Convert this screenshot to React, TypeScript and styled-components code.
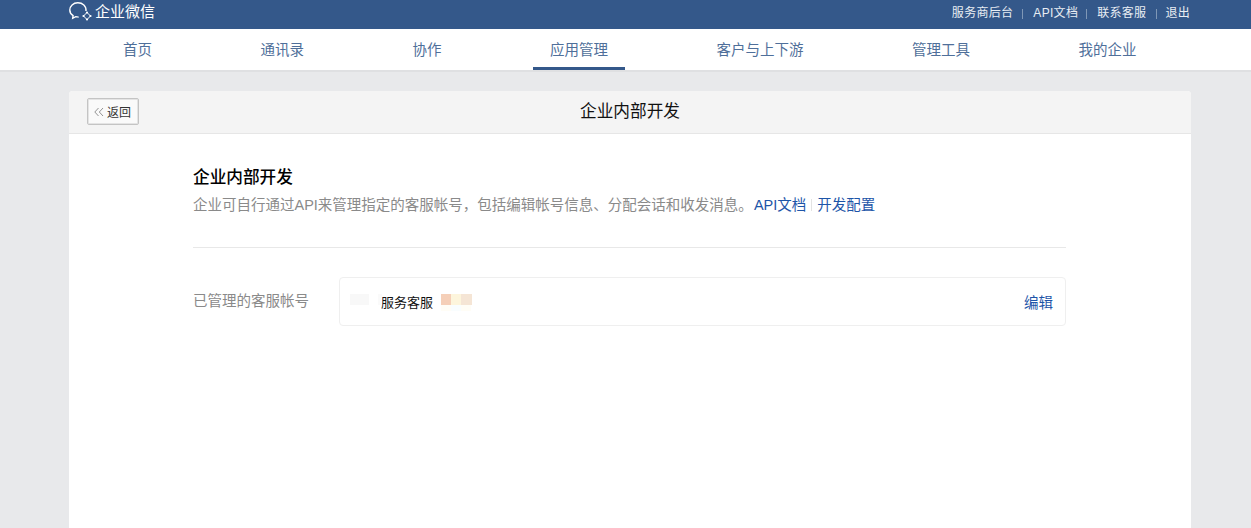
import React from 'react';
import styled, { createGlobalStyle } from 'styled-components';

const FONT = '"PingFang SC", "Liberation Sans", "Noto Sans CJK SC", sans-serif';

const GlobalStyle = createGlobalStyle`
    html, body {
        margin: 0;
        padding: 0;
        height: 100%;
        overflow: hidden;
        background: #e8e9eb;
        font-family: ${FONT};
    }
`;

const TopBar = styled.div`
    height: 29px;
    background: #34588a;
    padding: 0 61px 0 69px;
    display: flex;
    align-items: center;
    justify-content: space-between;
`;

const Logo = styled.div`
    display: flex;
    align-items: center;
    gap: 2px;
    margin-top: -5px;
    color: #fff;
    font-size: 15px;
    line-height: 20px;
`;

const TopLinks = styled.div`
    display: flex;
    align-items: center;
    margin-top: -4px;
    font-size: 12px;
    line-height: 16px;
    color: #e8edf3;
`;

const TopLink = styled.span`
    letter-spacing: 0.3px;
`;

const TopSep = styled.span<{ $gapLeft: number; $gapRight: number }>`
    width: 1px;
    height: 10px;
    background: #7f97b6;
    margin: 2px ${({ $gapRight }) => $gapRight}px 0 ${({ $gapLeft }) => $gapLeft}px;
`;

const Nav = styled.nav`
    height: 41px;
    background: #fff;
    border-bottom: 2px solid #dfe0e2;
    display: flex;
    padding-left: 106px;
    gap: 75px;
`;

const NavItem = styled.a<{ $active?: boolean }>`
    height: 41px;
    box-sizing: border-box;
    padding: 1px 16.5px 0 17px;
    font-size: 14.5px;
    line-height: 41px;
    color: #4f6f9a;
    border-bottom: 3px solid ${({ $active }) => ($active ? '#34588a' : 'transparent')};
`;

const Card = styled.main`
    margin: 19px 60px 0 69px;
    height: 440px;
    background: #fff;
    border-radius: 4px 4px 0 0;
`;

const CardHeader = styled.header`
    position: relative;
    height: 43px;
    padding-bottom: 1px;
    box-sizing: border-box;
    background: #f4f4f4;
    border-bottom: 1px solid #e6e6e6;
    border-radius: 4px 4px 0 0;
    display: flex;
    align-items: center;
    justify-content: center;
    font-size: 16.67px;
    line-height: 40px;
    color: #111;
`;

const BackButton = styled.button`
    position: absolute;
    left: 18px;
    top: 7px;
    width: 52px;
    height: 27px;
    box-sizing: border-box;
    padding: 0 0 0 6px;
    display: flex;
    align-items: center;
    gap: 3px;
    background: #fafafa;
    border: 1px solid #c4c4c4;
    border-radius: 2px;
    box-shadow: inset 0 0 0 1px #e4e4e4;
    font-family: ${FONT};
    font-size: 12px;
    color: #333;
`;

const Content = styled.section`
    margin: 0 125px 0 124px;
    padding-top: 33px;
`;

const Title = styled.h2`
    margin: 0;
    font-size: 16.67px;
    line-height: 22px;
    font-weight: 500;
    color: #000;
`;

const Desc = styled.p`
    margin: 6px 0 0;
    font-size: 14.5px;
    line-height: 20px;
    color: #8a8a8a;
    padding-bottom: 32px;
    border-bottom: 1px solid #e8e8e8;
`;

const DocLink = styled.a<{ $first?: boolean }>`
    color: #1d55a8;
    margin-left: ${({ $first }) => ($first ? '1px' : '0')};
`;

const LinkSep = styled.span`
    display: inline-block;
    width: 1px;
    height: 12px;
    margin: 0 5px;
    vertical-align: -1px;
    background: #e3e3e3;
`;

const Row = styled.div`
    display: flex;
    margin-top: 29px;
`;

const RowLabel = styled.div`
    width: 146px;
    font-size: 14.5px;
    line-height: 49px;
    color: #8a8a8a;
`;

const AccountBox = styled.div`
    position: relative;
    flex: 1;
    height: 49px;
    box-sizing: border-box;
    border: 1px solid #efefef;
    border-radius: 4px;
    padding: 0 12px 0 41px;
    display: flex;
    align-items: center;
    justify-content: space-between;
`;

const AccountName = styled.span`
    font-size: 13px;
    color: #111;
`;

const EditLink = styled.a`
    font-size: 14.5px;
    color: #1d55a8;
`;

const Blur = styled.i<{ $x: number; $y: number; $w: number; $h: number; $c: string }>`
    position: absolute;
    left: ${({ $x }) => $x}px;
    top: ${({ $y }) => $y}px;
    width: ${({ $w }) => $w}px;
    height: ${({ $h }) => $h}px;
    background: ${({ $c }) => $c};
`;

const blurs = [
    { x: 10, y: 16, w: 19, h: 11, c: '#f8f8f8' },
    { x: 38, y: 16, w: 4, h: 11, c: '#fafafa' },
    { x: 101, y: 16, w: 10, h: 11, c: '#f5cfb8' },
    { x: 111, y: 16, w: 10, h: 11, c: '#fdf5dc' },
    { x: 121, y: 16, w: 11, h: 11, c: '#f5e5d5' },
    { x: 101, y: 27, w: 10, h: 6, c: '#fffdf6' },
    { x: 111, y: 27, w: 10, h: 6, c: '#f9fdfe' },
    { x: 121, y: 27, w: 10, h: 6, c: '#fffdf6' },
];

const navItems = ['首页', '通讯录', '协作', '应用管理', '客户与上下游', '管理工具', '我的企业'];

const App: React.FC = () => (
    <>
        <GlobalStyle />
        <TopBar>
            <Logo>
                <svg width="24" height="20" viewBox="0 0 24 20" fill="none" stroke="#fff" strokeWidth="1.4">
                    <path d="M17 9C17.500 4 13.500.8 8.800.8 4.200.8.800 4 .8 8c0 2.500 1.300 4.500 3.300 5.700l-.4 2.600 3-1.600c1 .3 2 .4 3 .4" />
                    <path d="M18 10.500 21.500 14 18 17.500 14.500 14Z" strokeWidth="1" />
                    <circle cx="18" cy="10.500" r="1.100" fill="#fff" stroke="none" />
                    <circle cx="21.500" cy="14" r="1.100" fill="#fff" stroke="none" />
                    <circle cx="18" cy="17.500" r="1.100" fill="#fff" stroke="none" />
                    <circle cx="14.500" cy="14" r="1.100" fill="#fff" stroke="none" />
                </svg>
                企业微信
            </Logo>
            <TopLinks>
                <TopLink>服务商后台</TopLink>
                <TopSep $gapLeft={9} $gapRight={10} />
                <TopLink>API文档</TopLink>
                <TopSep $gapLeft={8} $gapRight={10} />
                <TopLink>联系客服</TopLink>
                <TopSep $gapLeft={10} $gapRight={8} />
                <TopLink>退出</TopLink>
            </TopLinks>
        </TopBar>
        <Nav>
            {navItems.map((item) => (
                <NavItem key={item} $active={item === '应用管理'}>
                    {item}
                </NavItem>
            ))}
        </Nav>
        <Card>
            <CardHeader>
                <BackButton>
                    <svg width="10" height="10" viewBox="0 0 10 10" fill="none" stroke="#888" strokeWidth="0.9">
                        <path d="M4.500 1 .8 5l3.700 4M9 1 5.300 5 9 9" />
                    </svg>
                    返回
                </BackButton>
                企业内部开发
            </CardHeader>
            <Content>
                <Title>企业内部开发</Title>
                <Desc>
                    企业可自行通过API来管理指定的客服帐号，包括编辑帐号信息、分配会话和收发消息。
                    <DocLink $first>API文档</DocLink>
                    <LinkSep />
                    <DocLink>开发配置</DocLink>
                </Desc>
                <Row>
                    <RowLabel>已管理的客服帐号</RowLabel>
                    <AccountBox>
                        <AccountName>服务客服</AccountName>
                        <EditLink>编辑</EditLink>
                        {blurs.map((b) => (
                            <Blur key={`${b.x}-${b.y}`} $x={b.x} $y={b.y} $w={b.w} $h={b.h} $c={b.c} />
                        ))}
                    </AccountBox>
                </Row>
            </Content>
        </Card>
    </>
);

export default App;
